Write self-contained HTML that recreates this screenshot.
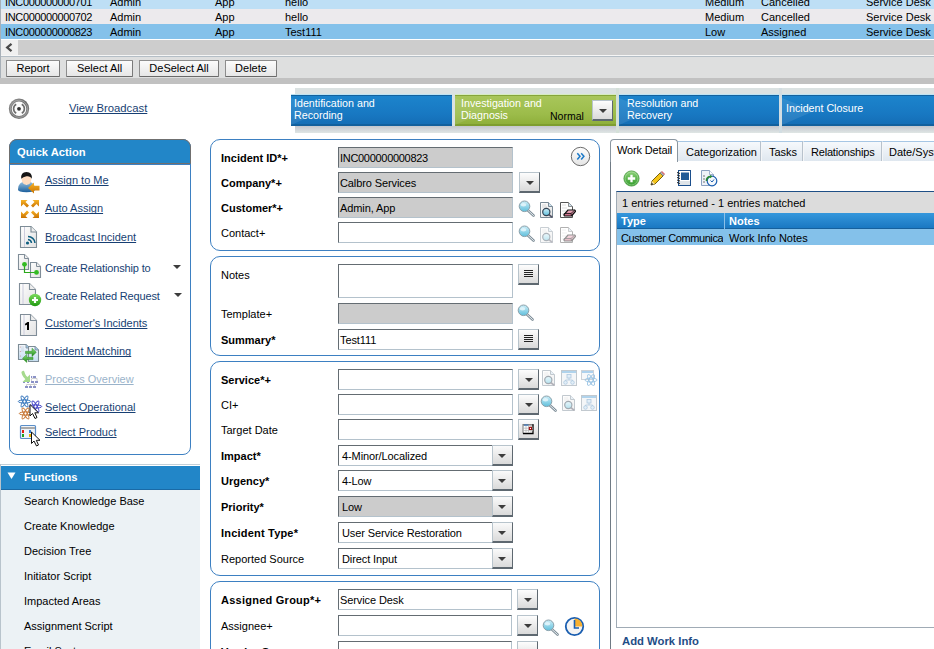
<!DOCTYPE html>
<html><head><meta charset="utf-8">
<style>
*{box-sizing:border-box;margin:0;padding:0}
html,body{width:934px;height:649px;overflow:hidden;background:#fff;font-family:"Liberation Sans",sans-serif;font-size:11px;color:#000;position:relative}
.a{position:absolute}
svg.a{overflow:visible}
.t{position:absolute;white-space:nowrap;line-height:13px}
.row{position:absolute;left:0;width:934px;height:15px}
.tr{letter-spacing:-0.35px}
.btn{position:absolute;top:60px;height:17px;border:1px solid #8d8d8d;border-bottom-color:#6a6a6a;border-right-color:#7a7a7a;border-radius:1px;background:linear-gradient(#fcfcfc,#e6e6e6);text-align:center;line-height:15px;font-size:11px}
.lc{position:absolute;top:95px;height:31px;color:#fff;line-height:12px;font-size:10.7px;padding:1px 0 0 3px;background:linear-gradient(#1c84cc,#1878c2 60%,#146cb4);border-top:1px solid #14629e;box-shadow:inset 0 -2px 0 #12609e,0 -1px 0 #bde3f3;overflow:visible}
.lc svg{position:absolute;left:0;top:0}
.lc span{position:relative}
.lnk{color:#173f73;text-decoration:underline;text-decoration-skip-ink:none}
.panel{position:absolute;border:1px solid #3d80c2;border-radius:10px;background:#fff}
.lbl{position:absolute;left:221px;white-space:nowrap;font-size:11px;line-height:13px}
.b{font-weight:bold}
.inp{position:absolute;left:338px;width:175px;height:21px;padding-top:1px;border:1px solid #646c72;border-right-color:#b4c2cc;border-bottom-color:#b4c2cc;background:#fff;font-size:11px;line-height:18px;padding-left:1px;white-space:nowrap;overflow:hidden;letter-spacing:-0.1px}

.sel{position:absolute;left:338px;width:175px;height:21px;padding-top:1px;border:1px solid #646c72;border-right-color:#b4c2cc;border-bottom-color:#b4c2cc;background:#fff;font-size:11px;line-height:18px;padding-left:3px;white-space:nowrap;letter-spacing:-0.1px}
.sel:after{content:"";position:absolute;right:-1px;top:-1px;width:21px;height:21px;box-sizing:border-box;border:1px solid #b8c4cc;border-right-color:#5e6870;border-bottom:2px solid #5e6870;background:linear-gradient(#fafafa,#dadada)}
.sel i{position:absolute;right:6px;top:8px;width:0;height:0;border-left:4px solid transparent;border-right:4px solid transparent;border-top:4px solid #3c3c3c;z-index:2}
.dd{position:absolute;width:21px;height:21px;border:1px solid #b8c4cc;border-right-color:#5e6870;border-bottom:2px solid #5e6870;background:linear-gradient(#fdfdfd,#dadada)}
.dd i{position:absolute;left:6px;top:8px;width:0;height:0;border-left:4px solid transparent;border-right:4px solid transparent;border-top:4px solid #3c3c3c}
.qa{position:absolute;left:45px;white-space:nowrap;font-size:11px;line-height:13px;color:#173f73}
.fn{position:absolute;left:24px;white-space:nowrap;font-size:11px;line-height:13px}
.tab{position:absolute;top:141px;height:20px;border:1px solid #b8c2cc;border-top-color:#a6c6e4;border-left-color:#f4f6f8;border-bottom:none;background:linear-gradient(#f6f9fc,#dfe7ef);font-size:11px;line-height:20px;padding-left:7px;white-space:nowrap;overflow:hidden}
.gray{background:#cccccc}
.tri{position:absolute;width:0;height:0;border-left:4px solid transparent;border-right:4px solid transparent;border-top:4px solid #3c3c3c}
</style></head><body>
<svg width="0" height="0" style="position:absolute">
<defs>
<linearGradient id="gLens" x1="0" y1="0" x2="0" y2="1"><stop offset="0" stop-color="#cdeef8"/><stop offset="1" stop-color="#5fbfdc"/></linearGradient>
<linearGradient id="gBody" x1="0" y1="0" x2="0" y2="1"><stop offset="0" stop-color="#9cc4e2"/><stop offset="1" stop-color="#1b5f9c"/></linearGradient>
<linearGradient id="gOr" x1="0" y1="0" x2="0" y2="1"><stop offset="0" stop-color="#f8b428"/><stop offset="1" stop-color="#c97200"/></linearGradient>
<linearGradient id="gGreen" x1="0" y1="0" x2="0" y2="1"><stop offset="0" stop-color="#7ddc5e"/><stop offset="1" stop-color="#1f9a10"/></linearGradient>
<linearGradient id="gDoc" x1="0" y1="0" x2="1" y2="1"><stop offset="0" stop-color="#ffffff"/><stop offset="1" stop-color="#e2e2e2"/></linearGradient>
<linearGradient id="gPink" x1="0" y1="0" x2="0" y2="1"><stop offset="0" stop-color="#f2b8c8"/><stop offset="1" stop-color="#c05c78"/></linearGradient>
<symbol id="mag" viewBox="0 0 17 17"><line x1="9" y1="9.5" x2="15.5" y2="15.5" stroke="#7f8e98" stroke-width="2.6" stroke-linecap="round"/><line x1="9" y1="9.5" x2="15.5" y2="15.5" stroke="#e8eef2" stroke-width="1" stroke-linecap="round"/><circle cx="6.5" cy="6.3" r="5.3" fill="url(#gLens)" stroke="#8aa0aa" stroke-width="1"/><ellipse cx="5.5" cy="4.8" rx="2.8" ry="1.8" fill="#eaf8fc" opacity=".8"/></symbol>
<symbol id="docmag" viewBox="0 0 15 16"><path d="M1.5 .5H9.5L13.5 4.5V15.5H1.5Z" fill="url(#gDoc)" stroke="#7a8a96"/><path d="M9.5 .5V4.5H13.5" fill="#cfe2ee" stroke="#7a8a96"/><path d="M3 3H7M3 5H8" stroke="#c4c4c4" stroke-width=".6"/><line x1="9" y1="12" x2="13.5" y2="15.5" stroke="#556" stroke-width="1.6"/><circle cx="7.3" cy="10" r="3.6" fill="url(#gLens)" stroke="#345" stroke-width="1.2"/></symbol>
<symbol id="docerase" viewBox="0 0 16 16"><path d="M.5 .5H8.5L12.5 4.5V15.5H.5Z" fill="#fff" stroke="#555"/><path d="M8.5 .5V4.5H12.5" fill="#cfe2ee" stroke="#777" stroke-width=".8"/><path d="M2 3H6M2 6H7M2 9H6M2 12H3" stroke="#c8c8c8" stroke-width=".6"/><path d="M3.8 12.8L8 8H14.8L15.6 9.2L11.5 14H4.5Z" fill="url(#gPink)" stroke="#111" stroke-width="1.2" stroke-linejoin="round"/><path d="M11.5 14L11 11.5L14.8 8M11 11.5H3.8" fill="none" stroke="#111" stroke-width=".8"/></symbol>
<symbol id="tree" viewBox="0 0 16 16"><rect x=".5" y=".5" width="15" height="15" fill="#eef1f4" stroke="#9aa6b0"/><rect x="1" y="1" width="14" height="2" fill="#7cb6e0"/><rect x="6" y="4.5" width="4" height="3.5" fill="#cfe4f4" stroke="#7aa6cc" stroke-width=".8"/><path d="M8 8V10M4.5 10H11.5M4.5 10V11M11.5 10V11" stroke="#7aa6cc" stroke-width=".8" fill="none"/><circle cx="4.5" cy="12.5" r="1.8" fill="#cfe4f4" stroke="#7aa6cc" stroke-width=".8"/><circle cx="11.5" cy="12.5" r="1.8" fill="#cfe4f4" stroke="#7aa6cc" stroke-width=".8"/></symbol>
<symbol id="notes" viewBox="0 0 21 21"><path d="M6 6.5H15M6 8.5H15M6 10.5H15M6 12.5H15" stroke="#222" stroke-width="1.1"/></symbol>
</defs></svg>

<!-- top table rows -->
<div class="row" style="top:-6px;background:#bedff5"></div>
<div class="row" style="top:9px;background:#eceaed"></div>
<div class="row" style="top:24px;background:#84c1ea"></div>
<div class="a" style="left:0;top:0;width:1px;height:78px;background:#a8b0b8;z-index:3"></div>
<div class="t tr" style="left:5px;top:-4px">INC000000000701</div>
<div class="t" style="left:110px;top:-4px">Admin</div>
<div class="t" style="left:215px;top:-4px">App</div>
<div class="t" style="left:285px;top:-4px">hello</div>
<div class="t" style="left:705px;top:-4px">Medium</div>
<div class="t" style="left:761px;top:-4px">Cancelled</div>
<div class="t" style="left:866px;top:-4px">Service Desk</div>
<div class="t tr" style="left:5px;top:11px">INC000000000702</div>
<div class="t" style="left:110px;top:11px">Admin</div>
<div class="t" style="left:215px;top:11px">App</div>
<div class="t" style="left:285px;top:11px">hello</div>
<div class="t" style="left:705px;top:11px">Medium</div>
<div class="t" style="left:761px;top:11px">Cancelled</div>
<div class="t" style="left:866px;top:11px">Service Desk</div>
<div class="t tr" style="left:5px;top:26px">INC000000000823</div>
<div class="t" style="left:110px;top:26px">Admin</div>
<div class="t" style="left:215px;top:26px">App</div>
<div class="t" style="left:285px;top:26px">Test111</div>
<div class="t" style="left:705px;top:26px">Low</div>
<div class="t" style="left:761px;top:26px">Assigned</div>
<div class="t" style="left:866px;top:26px">Service Desk</div>

<!-- scrollbar -->
<div class="a" style="left:0;top:39px;width:934px;height:1px;background:#fff"></div>
<div class="a" style="left:0;top:40px;width:934px;height:15px;background:#cdcdcd"></div>
<div class="a" style="left:1px;top:40px;width:17px;height:15px;background:#f0f0f0"></div>
<svg class="a" style="left:0;top:40px" width="18" height="15"><polyline points="11.5,3.8 7.2,7.5 11.5,11.2" fill="none" stroke="#4a4a4a" stroke-width="2.3"/></svg>

<!-- toolbar -->
<div class="a" style="left:0;top:55px;width:934px;height:1px;background:#f6f6f6"></div>
<div class="a" style="left:0;top:56px;width:934px;height:1px;background:#b4bec6"></div>
<div class="a" style="left:0;top:57px;width:934px;height:21px;background:#dedfdf"></div>
<div class="a" style="left:0;top:78px;width:934px;height:6px;background:#c1c1c1"></div>
<div class="btn" style="left:6px;width:54px">Report</div>
<div class="btn" style="left:66px;width:67px">Select All</div>
<div class="btn" style="left:139px;width:80px">DeSelect All</div>
<div class="btn" style="left:225px;width:52px">Delete</div>

<!-- broadcast -->
<svg class="a" style="left:8px;top:98px" width="22" height="22" viewBox="0 0 22 22">
<defs><linearGradient id="gRing" x1="0" y1="0" x2="1" y2="1"><stop offset="0" stop-color="#9a9a9a"/><stop offset=".5" stop-color="#6a6a6a"/><stop offset="1" stop-color="#888"/></linearGradient></defs>
<circle cx="11" cy="10.8" r="10.2" fill="url(#gRing)"/>
<circle cx="11" cy="10.8" r="8.6" fill="none" stroke="#a8a8a8" stroke-width=".8"/>
<circle cx="11" cy="10.8" r="7.3" fill="#fbfbfb"/>
<path d="M8.2 6.3A5.2 5.2 0 0 0 8.2 15.3M13.8 6.3A5.2 5.2 0 0 1 13.8 15.3" fill="none" stroke="#6c6c6c" stroke-width="1.6"/>
<circle cx="11" cy="10.8" r="1.9" fill="#333"/>
</svg>
<div class="t lnk" style="left:69px;top:102px;font-size:11.3px">View Broadcast</div>

<!-- lifecycle -->
<div class="a" style="left:295px;top:88px;width:639px;height:45px;background:#dbe2e2"></div>
<div class="a" style="left:295px;top:126px;width:639px;height:7px;background:linear-gradient(#c4c6ce,#d2d6da 50%,#dfe6e4)"></div>
<div class="lc" style="left:291px;width:161px"><svg width="60" height="31"><path d="M0 2L32 15L0 29Z" fill="#fff" opacity=".09"/></svg><span>Identification and<br>Recording</span></div>
<div class="lc" style="left:455px;width:161px;padding-left:6px;background:linear-gradient(#a8c65a,#9cbc4a 60%,#8cad38);border-top-color:#86a53a;box-shadow:inset 0 -2px 0 #7e9e30,0 -1px 0 #d6ecc0"><svg width="60" height="31"><path d="M0 2L32 15L0 29Z" fill="#fff" opacity=".09"/></svg><span>Investigation and<br>Diagnosis</span></div>
<div class="t" style="left:550px;top:110px;color:#000;font-size:10.5px">Normal</div>
<div class="dd" style="left:592px;top:100px;width:21px;height:21px"><i></i></div>
<div class="a" style="left:616px;top:88px;width:3px;height:45px;background:#d4e0d8"></div>
<div class="lc" style="left:619px;width:160px;padding-left:8px"><svg width="60" height="31"><path d="M0 2L32 15L0 29Z" fill="#fff" opacity=".09"/></svg><span>Resolution and<br>Recovery</span></div>
<div class="a" style="left:779px;top:88px;width:3px;height:45px;background:#d2dde2"></div>
<div class="lc" style="left:782px;width:152px;padding:6px 0 0 4px"><svg width="60" height="31"><path d="M0 2L32 15L0 29Z" fill="#fff" opacity=".09"/></svg><span>Incident Closure</span></div>

<!-- quick action -->
<div class="a" style="left:9px;top:139px;width:182px;height:316px;border:1px solid #3d80c2;border-radius:8px;background:#fff"></div>
<div class="a" style="left:9px;top:139px;width:182px;height:25px;border:1px solid #6f6f6f;border-radius:8px 8px 0 0;background:#2286c8"></div>
<div class="a" style="left:9px;top:164px;width:182px;height:1px;background:#3d80c2"></div>
<div class="t b" style="left:17px;top:146px;color:#fff;font-size:11.2px">Quick Action</div>

<svg class="a" style="left:14px;top:166px" width="30" height="30" viewBox="0 0 30 30">
<path d="M4 23.5Q4 15.5 12.5 15.3Q21 15.5 21 23.5Q21 26.3 12.5 26.3Q4 26.3 4 23.5Z" fill="url(#gBody)"/>
<path d="M10 16L12.5 19L15 16Z" fill="#fff"/>
<ellipse cx="12.5" cy="13.5" rx="4.8" ry="5.3" fill="#ffdcc0"/>
<path d="M7.2 12.8Q6.5 6 12.5 6Q18.5 6 17.8 12.8Q16.5 9.5 12.5 10.3Q9 11 7.2 12.8Z" fill="#151515"/>
<path d="M14 22L20 16.5V19.8H25.5V24.5H20V27.5Z" fill="url(#gOr)"/>
</svg>
<div class="qa lnk" style="top:174px">Assign to Me</div>

<svg class="a" style="left:14px;top:194px" width="30" height="30" viewBox="0 0 30 30" fill="url(#gOr)">
<path d="M7 6H13.5L11.5 8L15 11.5L13 13.5L9.5 10L7 12.5Z"/>
<path d="M25 6H18.5L20.5 8L17 11.5L19 13.5L22.5 10L25 12.5Z"/>
<path d="M7 24H13.5L11.5 22L15 18.5L13 16.5L9.5 20L7 17.5Z"/>
<path d="M25 24H18.5L20.5 22L17 18.5L19 16.5L22.5 20L25 17.5Z"/>
</svg>
<div class="qa lnk" style="top:202px">Auto Assign</div>

<svg class="a" style="left:14px;top:222px" width="30" height="30" viewBox="0 0 30 30">
<path d="M6.5 4.5H17L22.5 10V25.5H6.5Z" fill="url(#gDoc)" stroke="#7d8c96" stroke-width="1.1"/>
<path d="M17 4.5V10H22.5" fill="#eee" stroke="#7d8c96" stroke-width="1.1"/>
<line x1="10.5" y1="5" x2="10.5" y2="25" stroke="#ccd" stroke-width="1"/>
<circle cx="13.5" cy="21" r="1.6" fill="#0f5f80"/>
<path d="M14 17.5A4 4 0 0 1 17.5 21M14 14.5A7 7 0 0 1 21 21" fill="none" stroke="#0f5f80" stroke-width="1.5"/>
</svg>
<div class="qa lnk" style="top:231px">Broadcast Incident</div>

<svg class="a" style="left:12px;top:252px" width="36" height="30" viewBox="0 0 36 30">
<path d="M6.5 2.5H12.5L16.5 6.5V17.5H6.5Z" fill="url(#gDoc)" stroke="#808d98" stroke-width="1.1"/>
<path d="M12.5 2.5V6.5H16.5" fill="#eee" stroke="#808d98"/>
<path d="M18.5 10.5H24.5L28.5 14.5V25.5H18.5Z" fill="url(#gDoc)" stroke="#808d98" stroke-width="1.1"/>
<path d="M24.5 10.5V14.5H28.5" fill="#eee" stroke="#808d98"/>
<path d="M12.5 12.5V20.5H24.5" fill="none" stroke="#2aa81a" stroke-width="1.2"/>
<circle cx="12.5" cy="12.3" r="2.4" fill="#33bb22"/>
<circle cx="24.5" cy="20.4" r="2.4" fill="#33bb22"/>
</svg>
<div class="qa" style="top:262px;letter-spacing:-0.15px">Create Relationship to</div>
<div class="tri" style="left:173px;top:265px"></div>

<svg class="a" style="left:12px;top:280px" width="36" height="30" viewBox="0 0 36 30">
<path d="M7.5 3.5H17.5L23.5 9.5V24.5H7.5Z" fill="url(#gDoc)" stroke="#808d98" stroke-width="1.1"/>
<path d="M17.5 3.5V9.5H23.5" fill="#eee" stroke="#808d98" stroke-width="1.1"/>
<line x1="11" y1="4" x2="11" y2="24" stroke="#ccd"/>
<circle cx="23" cy="20" r="6.2" fill="url(#gGreen)"/>
<path d="M20 20H26M23 17V23" stroke="#fff" stroke-width="2.2"/>
</svg>
<div class="qa" style="top:290px;letter-spacing:-0.15px">Create Related Request</div>
<div class="tri" style="left:174px;top:293px"></div>

<svg class="a" style="left:12px;top:308px" width="36" height="30" viewBox="0 0 36 30">
<path d="M8.5 6.5H18.5L24.5 12.5V27.5H8.5Z" fill="url(#gDoc)" stroke="#808d98" stroke-width="1.1"/>
<path d="M18.5 6.5V12.5H24.5" fill="#eee" stroke="#808d98" stroke-width="1.1"/>
<line x1="12" y1="7" x2="12" y2="27" stroke="#ccd"/>
<path d="M12.8 16L15.5 14H17V22H15V16.8L13.5 17.6Z" fill="#000"/>
</svg>
<div class="qa lnk" style="top:317px">Customer's Incidents</div>

<svg class="a" style="left:12px;top:336px" width="36" height="30" viewBox="0 0 36 30">
<defs><linearGradient id="gDocB" x1="0" y1="0" x2="0" y2="1"><stop offset="0" stop-color="#f4f8fc"/><stop offset="1" stop-color="#c6def2"/></linearGradient><linearGradient id="gArr" x1="0" y1="0" x2="0" y2="1"><stop offset="0" stop-color="#8ee07a"/><stop offset="1" stop-color="#1c8a16"/></linearGradient></defs>
<path d="M6.5 8.5H14L17.5 12V23.5H6.5Z" fill="url(#gDocB)" stroke="#7d8c96" stroke-width="1.1"/>
<path d="M14 8.5V12H17.5" fill="#9cc8ec" stroke="#7d8c96" stroke-width=".8"/>
<path d="M9 11H12M9 13H12M9 15H12" stroke="#b8c8d8" stroke-width=".6"/>
<circle cx="8.3" cy="11" r=".5" fill="#c88"/><circle cx="8.3" cy="15.5" r=".5" fill="#c88"/><circle cx="8.3" cy="20" r=".5" fill="#c88"/>
<path d="M16.5 10.5H23L26.5 14V25.5H16.5Z" fill="url(#gDocB)" stroke="#7d8c96" stroke-width="1.1"/>
<path d="M23 10.5V14H26.5" fill="#9cc8ec" stroke="#7d8c96" stroke-width=".8"/>
<path d="M13.5 15.3H20V12.2L24.3 16.3L20 20.4V17.6H13.5Z" fill="url(#gArr)" stroke="#2a8a22" stroke-width=".5"/>
<path d="M21 21.3H14.8V18.4L10.5 22.4L14.8 26.4V23.6H21Z" fill="url(#gArr)" stroke="#2a8a22" stroke-width=".5"/>
</svg>
<div class="qa lnk" style="top:345px">Incident Matching</div>

<svg class="a" style="left:12px;top:364px" width="36" height="30" viewBox="0 0 36 30">
<path d="M11 8.5Q12 13 16.5 15.5" fill="none" stroke="#a6da8e" stroke-width="3.2" stroke-linecap="round"/>
<path d="M18 10.5V18H10.5Z" fill="#a6da8e"/>
<path d="M20 14.5H25M19.5 14.5V17M25 14.5V17M14.5 20.5H25M14.5 20.5V22M18.5 20.5V22M22.5 20.5V22M22 19V20.5" fill="none" stroke="#c8c8c8" stroke-width=".9"/>
<g fill="#8b92c6"><rect x="19" y="12" width="1.2" height="2"/><rect x="21" y="12" width="3" height="2"/><rect x="19" y="17" width="3" height="2"/><rect x="23" y="17" width="3" height="2"/><rect x="13" y="22" width="3" height="2"/><rect x="17" y="22" width="3" height="2"/><rect x="21" y="22" width="3" height="2"/><rect x="11" y="18" width="2" height="1"/><rect x="15" y="18" width="2" height="1"/></g>
</svg>
<div class="qa lnk" style="top:373px;color:#9ab3ca">Process Overview</div>

<svg class="a" style="left:12px;top:392px" width="36" height="30" viewBox="0 0 36 30">
<g fill="none" stroke="#3f7cc0" stroke-width="1"><ellipse cx="12.5" cy="9.5" rx="6.2" ry="1.6"/><ellipse cx="12.5" cy="9.5" rx="6.2" ry="1.6" transform="rotate(60 12.5 9.5)"/><ellipse cx="12.5" cy="9.5" rx="6.2" ry="1.6" transform="rotate(-60 12.5 9.5)"/></g>
<g fill="none" stroke="#4848c8" stroke-width="1"><ellipse cx="23.5" cy="14.5" rx="6.2" ry="1.6"/><ellipse cx="23.5" cy="14.5" rx="6.2" ry="1.6" transform="rotate(60 23.5 14.5)"/><ellipse cx="23.5" cy="14.5" rx="6.2" ry="1.6" transform="rotate(-60 23.5 14.5)"/></g>
<g fill="none" stroke="#c87838" stroke-width="1"><ellipse cx="13.5" cy="21.5" rx="6.2" ry="1.6"/><ellipse cx="13.5" cy="21.5" rx="6.2" ry="1.6" transform="rotate(60 13.5 21.5)"/><ellipse cx="13.5" cy="21.5" rx="6.2" ry="1.6" transform="rotate(-60 13.5 21.5)"/></g>
<path d="M18 12.5V24L20.5 21.5L23 26.5L25 25.5L22.8 20.8H26.5Z" fill="#fff" stroke="#111" stroke-width="1"/>
</svg>
<div class="qa lnk" style="top:401px">Select Operational</div>

<svg class="a" style="left:12px;top:418px" width="36" height="30" viewBox="0 0 36 30">
<rect x="8.5" y="7.5" width="15" height="13" rx="1" fill="#eef4fa" stroke="#5b8ec8" stroke-width="1.2"/>
<rect x="9" y="9" width="14" height="2" fill="#aaa"/>
<rect x="10" y="12" width="2" height="3" fill="#e02010"/><rect x="10" y="16" width="2" height="3" fill="#20a020"/><rect x="17" y="12" width="2" height="3" fill="#3a80d0"/><rect x="17" y="16" width="2" height="3" fill="#e8b000"/>
<path d="M19.5 14V25.5L22 23L24.5 28L26.5 27L24.3 22.3H28Z" fill="#fff" stroke="#111" stroke-width="1"/>
</svg>
<div class="qa lnk" style="top:426px">Select Product</div>

<!-- functions -->
<div class="a" style="left:0;top:464px;width:200px;height:1px;background:#c4d0d8"></div>
<div class="a" style="left:0;top:466px;width:200px;height:24px;background:#2286c8;border-bottom:1px solid #1a6aa6"></div>
<div class="a" style="left:0;top:490px;width:200px;height:159px;background:#ecf2f5"></div>
<div class="a" style="left:0;top:464px;width:1px;height:185px;background:#b8c4cc"></div>
<svg class="a" style="left:7px;top:472px" width="10" height="8"><path d="M.5 .5H8.5L4.5 7Z" fill="#fff"/></svg>
<div class="t b" style="left:24px;top:471px;color:#fff;font-size:11.2px">Functions</div>
<div class="fn" style="top:495px">Search Knowledge Base</div>
<div class="fn" style="top:520px">Create Knowledge</div>
<div class="fn" style="top:545px">Decision Tree</div>
<div class="fn" style="top:570px">Initiator Script</div>
<div class="fn" style="top:595px">Impacted Areas</div>
<div class="fn" style="top:620px">Assignment Script</div>
<div class="fn" style="top:645px">Email System</div>

<!-- form panels -->
<div class="panel" style="left:210px;top:139px;width:390px;height:112px"></div>
<div class="panel" style="left:210px;top:256px;width:390px;height:100px"></div>
<div class="panel" style="left:210px;top:361px;width:390px;height:215px"></div>
<div class="panel" style="left:210px;top:581px;width:390px;height:100px"></div>

<div class="lbl b" style="top:152px">Incident ID*+</div>
<div class="inp gray" style="top:147px;letter-spacing:-0.3px">INC000000000823</div>
<svg class="a" style="left:570px;top:146px" width="21" height="21" viewBox="0 0 21 21">
<defs><linearGradient id="gBtnC" x1="0" y1="0" x2="0" y2="1"><stop offset="0" stop-color="#fdfdfd"/><stop offset="1" stop-color="#e4e4e4"/></linearGradient></defs>
<circle cx="10.5" cy="10.5" r="9.2" fill="url(#gBtnC)" stroke="#6d6d6d" stroke-width="1"/>
<path d="M7.3 7.3L10 10.3L7.3 13.5M11.2 7.3L13.9 10.3L11.2 13.5" fill="none" stroke="#1a78c8" stroke-width="1.5"/>
</svg>
<div class="lbl b" style="top:177px">Company*+</div>
<div class="inp gray" style="top:172px">Calbro Services</div>
<div class="dd" style="left:519px;top:172px"><i></i></div>
<div class="lbl b" style="top:202px">Customer*+</div>
<div class="inp gray" style="top:197px">Admin, App</div>
<svg class="a" style="left:518px;top:200px" width="17" height="17"><use href="#mag"/></svg>
<svg class="a" style="left:539px;top:202px" width="15" height="16"><use href="#docmag"/></svg>
<svg class="a" style="left:560px;top:202px" width="16" height="16"><use href="#docerase"/></svg>
<div class="lbl" style="top:227px">Contact+</div>
<div class="inp" style="top:222px"></div>
<svg class="a" style="left:518px;top:225px" width="17" height="17"><use href="#mag"/></svg>
<svg class="a" style="left:539px;top:227px;opacity:.4" width="15" height="16"><use href="#docmag"/></svg>
<svg class="a" style="left:560px;top:227px;opacity:.45" width="16" height="16"><use href="#docerase"/></svg>

<div class="lbl" style="top:269px">Notes</div>
<div class="inp" style="top:264px;height:34px"></div>
<div class="dd" style="left:518px;top:264px;height:21px"><svg class="a" style="left:-1px;top:-1px" width="21" height="21"><use href="#notes"/></svg></div>
<div class="lbl" style="top:308px">Template+</div>
<div class="inp gray" style="top:303px"></div>
<svg class="a" style="left:517px;top:304px" width="17" height="17"><use href="#mag"/></svg>
<div class="lbl b" style="top:334px">Summary*</div>
<div class="inp" style="top:329px">Test111</div>
<div class="dd" style="left:518px;top:329px;height:21px"><svg class="a" style="left:-1px;top:-1px" width="21" height="21"><use href="#notes"/></svg></div>

<div class="lbl b" style="top:374px">Service*+</div>
<div class="inp" style="top:369px"></div>
<div class="dd" style="left:518px;top:369px"><i></i></div>
<svg class="a" style="left:541px;top:370px;opacity:.45" width="15" height="16"><use href="#docmag"/></svg>
<svg class="a" style="left:561px;top:370px;opacity:.6" width="16" height="16"><use href="#tree"/></svg>
<svg class="a" style="left:581px;top:370px;opacity:.7" width="16" height="16" viewBox="0 0 16 16"><rect x=".5" y=".5" width="12" height="9" fill="#f4f6f8" stroke="#b8c0c8"/><rect x="1" y="1" width="11" height="2" fill="#8cc0e8"/><g fill="none" stroke="#6aa8d8" stroke-width=".9"><ellipse cx="10" cy="10" rx="6" ry="2"/><ellipse cx="10" cy="10" rx="6" ry="2" transform="rotate(60 10 10)"/><ellipse cx="10" cy="10" rx="6" ry="2" transform="rotate(-60 10 10)"/></g></svg>
<div class="lbl" style="top:399px">CI+</div>
<div class="inp" style="top:394px"></div>
<div class="dd" style="left:518px;top:394px"><i></i></div>
<svg class="a" style="left:540px;top:395px" width="17" height="17"><use href="#mag"/></svg>
<svg class="a" style="left:561px;top:395px;opacity:.45" width="15" height="16"><use href="#docmag"/></svg>
<svg class="a" style="left:581px;top:395px;opacity:.6" width="16" height="16"><use href="#tree"/></svg>
<div class="lbl" style="top:424px">Target Date</div>
<div class="inp" style="top:419px"></div>
<div class="dd" style="left:518px;top:419px"><svg class="a" style="left:4px;top:4px" width="11" height="10" viewBox="0 0 11 10"><rect x="0" y="0" width="10.5" height="9.5" fill="#fff"/><rect x="0" y="0" width="10.5" height="1.6" fill="#8a8a8a"/><rect x="1" y=".5" width="4.5" height="1.1" fill="#2f72c0"/><path d="M0 0V9.5" stroke="#777" stroke-width="1"/><path d="M10 .3V9.5H0" fill="none" stroke="#000" stroke-width="1.3"/><path d="M3 2V9M5.5 2V9M8 2V9M0 4.2H10M0 6.6H10" stroke="#b0b0b0" stroke-width=".7"/><rect x="5.8" y="2.8" width="3.2" height="3.2" fill="#a00c0c"/><rect x="6.9" y="3.9" width="1.1" height="1.1" fill="#fff"/></svg></div>
<div class="lbl b" style="top:450px">Impact*</div>
<div class="sel" style="top:445px">4-Minor/Localized<i></i></div>
<div class="lbl b" style="top:475px">Urgency*</div>
<div class="sel" style="top:470px">4-Low<i></i></div>
<div class="lbl b" style="top:501px">Priority*</div>
<div class="sel gray" style="top:496px">Low<i></i></div>
<div class="lbl b" style="top:527px;letter-spacing:0.2px">Incident Type*</div>
<div class="sel" style="top:522px">User Service Restoration<i></i></div>
<div class="lbl" style="top:553px">Reported Source</div>
<div class="sel" style="top:548px">Direct Input<i></i></div>

<div class="lbl b" style="top:594px;letter-spacing:0.25px">Assigned Group*+</div>
<div class="inp" style="top:589px;width:174px">Service Desk</div>
<div class="dd" style="left:517px;top:589px"><i></i></div>
<div class="lbl" style="top:620px">Assignee+</div>
<div class="inp" style="top:615px;width:174px"></div>
<div class="dd" style="left:517px;top:615px"><i></i></div>
<svg class="a" style="left:542px;top:619px" width="17" height="17"><use href="#mag"/></svg>
<svg class="a" style="left:564px;top:616px" width="21" height="21" viewBox="0 0 21 21"><circle cx="10.5" cy="10.5" r="8.7" fill="#f4f4f4" stroke="#1a5eb0" stroke-width="1.8"/><path d="M10.5 2.5A8 8 0 0 1 18.5 10.5H10.5Z" fill="#f8b030"/><path d="M10.5 4V12H15" fill="none" stroke="#1a5eb0" stroke-width="1.6"/></svg>
<div class="lbl b" style="top:646px">Vendor Group+</div>
<div class="inp" style="top:641px;width:174px"></div>
<div class="dd" style="left:517px;top:641px"></div>

<!-- right tabs -->
<div class="a" style="left:610px;top:160px;width:330px;height:500px;border-left:1px solid #6f7a84;border-top:1px solid #8e9aa4;background:#fff"></div>
<div class="tab" style="left:677px;width:84px;padding-left:8px">Categorization</div>
<div class="tab" style="left:761px;width:42px">Tasks</div>
<div class="tab" style="left:803px;width:79px;padding-left:7px;letter-spacing:-0.2px">Relationships</div>
<div class="tab" style="left:882px;width:60px;padding-left:6px">Date/System</div>
<div class="tab" style="left:610px;top:139px;height:23px;width:68px;background:#fff;border:1px solid #8a96a0;border-bottom:none;border-radius:4px 4px 0 0;line-height:20px;padding-left:6px;letter-spacing:-0.15px">Work Detail</div>
<svg class="a" style="left:623px;top:170px" width="17" height="17" viewBox="0 0 17 17"><defs><linearGradient id="gG2" x1="0" y1="0" x2="0" y2="1"><stop offset="0" stop-color="#8fd37a"/><stop offset="1" stop-color="#2f9a28"/></linearGradient></defs><circle cx="8.5" cy="8.5" r="7.6" fill="url(#gG2)" stroke="#4a9a40" stroke-width=".8"/><circle cx="8.5" cy="8.5" r="6.4" fill="none" stroke="#c8ecc0" stroke-width=".6" opacity=".7"/><path d="M4.8 8.5H12.2M8.5 4.8V12.2" stroke="#fff" stroke-width="2.3"/></svg>
<svg class="a" style="left:649px;top:170px" width="17" height="17" viewBox="0 0 17 17"><path d="M2 15L3 11L11 3L14 6L6 14Z" fill="#f5c518" stroke="#6a5200" stroke-width=".9"/><path d="M11 3L12.2 1.8L15.2 4.8L14 6Z" fill="#b8b8b8" stroke="#666" stroke-width=".6"/><path d="M12.2 1.8L13 1L16 4L15.2 4.8Z" fill="#e06070"/><path d="M2 15L3 11L6 14Z" fill="#f4e0b0"/><path d="M2 15L2.6 12.6L4.4 14.4Z" fill="#222"/></svg>
<svg class="a" style="left:676px;top:170px" width="15" height="16" viewBox="0 0 15 16"><rect x="2.5" y=".5" width="12" height="15" fill="#dfe4e8" stroke="#1c4f8c"/><rect x="3" y="1" width="11" height="10" fill="#fff"/><rect x="5" y="2.5" width="8" height="7.5" fill="#1f5a96"/><path d="M1 2.5L4 3.5M1 5L4 6M1 7.5L4 8.5M1 10L4 11M1 12.5L4 13.5" stroke="#222" stroke-width="1"/></svg>
<svg class="a" style="left:701px;top:170px" width="17" height="17" viewBox="0 0 17 17"><path d="M.5 .5H8.5L12.5 4.5V15.5H.5Z" fill="#eef2f8" stroke="#8aa0c0"/><path d="M8.5 .5V4.5H12.5" fill="#fff" stroke="#8aa0c0" stroke-width=".8"/><path d="M2 6H4M2 9H4M2 12H4" stroke="#777"/><circle cx="11" cy="11" r="4.8" fill="#f4f8fc" stroke="#1a5eb0" stroke-width="1.2"/><path d="M9.5 10.5L11 12L13 9.5" fill="none" stroke="#1a5eb0" stroke-width="1"/><path d="M5.5 11A4 4 0 0 1 10 6.5" fill="none" stroke="#2a8a30" stroke-width="1.6"/><path d="M9 5L11.5 6.6L9 8.2Z" fill="#2a8a30"/></svg>

<div class="a" style="left:616px;top:191px;width:320px;height:437px;border:1px solid #a0abb5;border-top:1px solid #1f4f86;background:#fff"></div>
<div class="a" style="left:617px;top:192px;width:320px;height:21px;background:#dcdcdc"></div>
<div class="t" style="left:622px;top:197px">1 entries returned - 1 entries matched</div>
<div class="a" style="left:617px;top:213px;width:320px;height:16px;background:linear-gradient(#3597dc,#1a78c2);border-bottom:1px solid #16609c"></div>
<div class="t b" style="left:621px;top:215px;color:#fff">Type</div>
<div class="a" style="left:724px;top:213px;width:1px;height:16px;background:#8cc0e8"></div>
<div class="t b" style="left:729px;top:215px;color:#fff">Notes</div>
<div class="a" style="left:617px;top:229px;width:320px;height:16px;background:#84c1ea"></div>
<div class="t" style="left:621px;top:232px;width:102px;overflow:hidden;letter-spacing:-0.4px">Customer Communica</div>
<div class="t" style="left:729px;top:232px">Work Info Notes</div>
<div class="t b" style="left:622px;top:635px;color:#1f4d86;font-size:11.3px">Add Work Info</div>

</body></html>
